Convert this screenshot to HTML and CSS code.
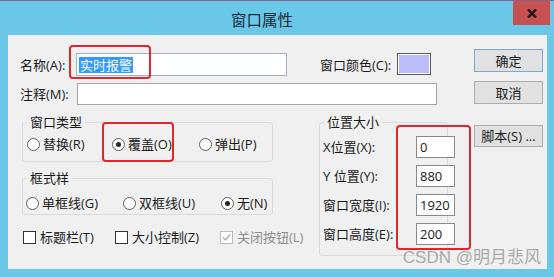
FILE: index.html
```html
<!DOCTYPE html>
<html lang="zh-CN">
<head>
<meta charset="utf-8">
<title>窗口属性</title>
<link rel="stylesheet" href="styles.css">
</head>
<body>
<div class="window">
  <div class="titlebar">
    <span class="title">窗口属性</span>
    <span class="close">
      <svg width="10" height="9" viewBox="0 0 10 9"><path d="M1 0.5 L9 8.5 M9 0.5 L1 8.5" stroke="#1a1a1a" stroke-width="2.4" fill="none"/></svg>
    </span>
  </div>
  <div class="client">
    <div class="main">
      <div class="row row-name">
        <span class="lbl">名称(A):</span>
        <div class="input input-name"><span class="sel">实时报警</span></div>
        <span class="lbl lbl-color">窗口颜色(C):</span>
        <div class="swatch"></div>
      </div>
      <div class="row row-comment">
        <span class="lbl lbl-comment">注释(M):</span>
        <div class="input input-comment"></div>
      </div>
      <div class="lower">
        <div class="left">
          <fieldset class="group g-type">
            <legend>窗口类型</legend>
            <div class="opts opts-type">
              <span class="opt"><span class="radio"></span>替换(R)</span>
              <span class="opt"><span class="radio on"></span>覆盖(O)</span>
              <span class="opt"><span class="radio"></span>弹出(P)</span>
            </div>
          </fieldset>
          <fieldset class="group g-frame">
            <legend>框式样</legend>
            <div class="opts opts-frame">
              <span class="opt"><span class="radio"></span>单框线(G)</span>
              <span class="opt"><span class="radio"></span>双框线(U)</span>
              <span class="opt"><span class="radio on"></span>无(N)</span>
            </div>
          </fieldset>
          <div class="opts checks">
            <span class="opt opt-cb"><span class="cb"></span>标题栏(T)</span>
            <span class="opt opt-cb"><span class="cb"></span>大小控制(Z)</span>
            <span class="opt opt-cb dis"><span class="cb"><svg width="11" height="11" viewBox="0 0 11 11"><path d="M2 5.5 L4.5 8 L9 2.5" stroke="#a8a8a8" stroke-width="1.4" fill="none"/></svg></span>关闭按钮(L)</span>
          </div>
        </div>
        <fieldset class="group g-pos">
          <legend>位置大小</legend>
          <div class="pos-grid">
            <span class="plbl">X位置(X):</span><div class="pin">0</div>
            <span class="plbl">Y 位置(Y):</span><div class="pin">880</div>
            <span class="plbl">窗口宽度(I):</span><div class="pin">1920</div>
            <span class="plbl">窗口高度(E):</span><div class="pin">200</div>
          </div>
        </fieldset>
      </div>
    </div>
    <div class="buttons">
      <button class="btn btn-default">确定</button>
      <button class="btn btn-cancel">取消</button>
      <button class="btn btn-script">脚本(S) ...</button>
    </div>
  </div>
  <div class="mark m1"></div>
  <div class="mark m2"></div>
  <div class="mark m3"></div>
  <div class="watermark">CSDN @明月悲风</div>
</div>
</body>
</html>
```

FILE: styles.css
```css
* { box-sizing: border-box; }
html, body { margin: 0; padding: 0; }
body {
  width: 554px;
  height: 277px;
  overflow: hidden;
  background: #69c7e8;
  font-family: "Open Sans", "Noto Sans CJK SC", sans-serif;
  font-size: 13px;
  line-height: 16px;
  color: #1a1a1a;
}
.window {
  position: relative;
  width: 554px;
  height: 277px;
  display: flex;
  flex-direction: column;
}
.titlebar {
  height: 35px;
  border-top: 1px solid #7d6590;
  display: flex;
  align-items: flex-start;
  flex: none;
}
.title {
  margin-left: 231px;
  margin-top: 9px;
  font-family: "Noto Sans CJK SC", sans-serif;
  font-size: 15.5px;
  line-height: 18px;
  color: #1b2a35;
}
.close {
  margin-left: auto;
  margin-right: 4px;
  width: 37px;
  height: 24px;
  background: #c75050;
  display: flex;
  align-items: center;
  justify-content: center;
}
.client {
  margin: 0 7px 0 8px;
  height: 234px;
  background: #f0f0f0;
  display: flex;
  flex: none;
}
.main {
  width: 440px;
  display: flex;
  flex-direction: column;
}
.row { display: flex; align-items: center; }
.row-name { margin-top: 18px; height: 23px; }
.row-comment { margin-top: 7px; height: 22px; }
.lbl {
  padding-left: 12px;
  width: 68px;
  white-space: nowrap;
  flex: none;
}
.lbl-comment { width: 69px; }
.lbl-color { margin-left: 33px; width: 77px; padding-left: 0; }
.input {
  background: #fff;
  flex: none;
}
.input-name {
  width: 211px;
  height: 23px;
  border: 1px solid #9fb2c9;
  padding: 0 2px;
  display: flex;
  align-items: center;
}
.sel {
  background: #3399ff;
  color: #fff;
  padding: 0 1px;
  line-height: 16px;
}
.input-comment {
  width: 360px;
  height: 22px;
  border: 1px solid #a5a5a5;
}
.swatch {
  width: 34px;
  height: 22px;
  align-self: flex-start;
  border: 1px solid #5a5a5a;
  box-shadow: inset 0 0 0 1px #ffffff;
  background: #bcbcfa;
  flex: none;
}
.lower {
  display: flex;
  margin-top: 9px;
}
.left {
  margin-left: 14px;
  width: 251px;
  display: flex;
  flex-direction: column;
}
.group {
  margin: 0;
  padding: 0;
  border: 1px solid #dadada;
  border-radius: 3px;
  min-width: 0;
}
.group legend {
  margin-left: 4px;
  padding: 0 3px;
  line-height: 16px;
}
.g-type { padding-bottom: 9px; }
.g-type .opts { margin-top: 6px; }
.g-frame { margin-top: 8px; padding-bottom: 3px; }
.g-frame .opts { margin-top: 9px; }
.opts {
  display: grid;
  height: 16px;
  align-items: center;
}
.opts-type { grid-template-columns: 85px 87px auto; padding-left: 4px; }
.opts-frame { grid-template-columns: 97px 98px auto; padding-left: 3px; }
.checks { grid-template-columns: 92px 105px auto; padding-left: 1px; margin-top: 14px; }
.opt {
  display: flex;
  align-items: center;
  gap: 3px;
  white-space: nowrap;
}
.opt-cb { gap: 4px; }
.radio {
  width: 13px;
  height: 13px;
  border-radius: 50%;
  border: 1px solid #5f5f5f;
  background: #fff;
  flex: none;
  display: flex;
  align-items: center;
  justify-content: center;
}
.radio.on::after {
  content: "";
  width: 5px;
  height: 5px;
  border-radius: 50%;
  background: #262626;
}
.cb {
  width: 13px;
  height: 13px;
  border: 1px solid #333;
  background: #fff;
  flex: none;
  display: flex;
  align-items: center;
  justify-content: center;
}
.dis { color: #8c8c8c; }
.dis .cb { border-color: #bcbcbc; }
.g-pos {
  margin-left: 46px;
  width: 147px;
  padding-bottom: 10px;
  align-self: flex-start;
}
.pos-grid {
  margin-top: 6px;
  padding-left: 3px;
  display: grid;
  grid-template-columns: 93px 39px;
  grid-auto-rows: 22px;
  row-gap: 7px;
  align-items: center;
}
.plbl { white-space: nowrap; }
.pin {
  height: 22px;
  border: 1px solid #8a8a8a;
  background: #fff;
  padding: 0 3px;
  line-height: 20px;
}
.buttons {
  margin-left: auto;
  margin-right: 4px;
  width: 69px;
  display: flex;
  flex-direction: column;
}
.btn {
  width: 69px;
  height: 23px;
  padding: 0;
  background: #e1e1e1;
  border: 1px solid #adadad;
  font: inherit;
  color: #1a1a1a;
  line-height: 16px;
}
.btn-default { margin-top: 14px; border-color: #7ea6cf; }
.btn-cancel { margin-top: 9px; }
.btn-script { margin-top: 21px; height: 22px; }
.mark {
  position: absolute;
  border: 2px solid #e3262b;
  border-radius: 4px;
  pointer-events: none;
}
.m1 { left: 69px; top: 45px; width: 82px; height: 34px; }
.m2 { left: 102px; top: 122px; width: 72px; height: 40px; }
.m3 { left: 396px; top: 125px; width: 75px; height: 125px; }
.watermark {
  position: absolute;
  right: 13px;
  top: 248px;
  font-family: "Liberation Sans", "Noto Sans CJK SC", sans-serif;
  font-size: 17px;
  line-height: 20px;
  color: rgba(150, 150, 150, 0.8);
  white-space: nowrap;
}
```
